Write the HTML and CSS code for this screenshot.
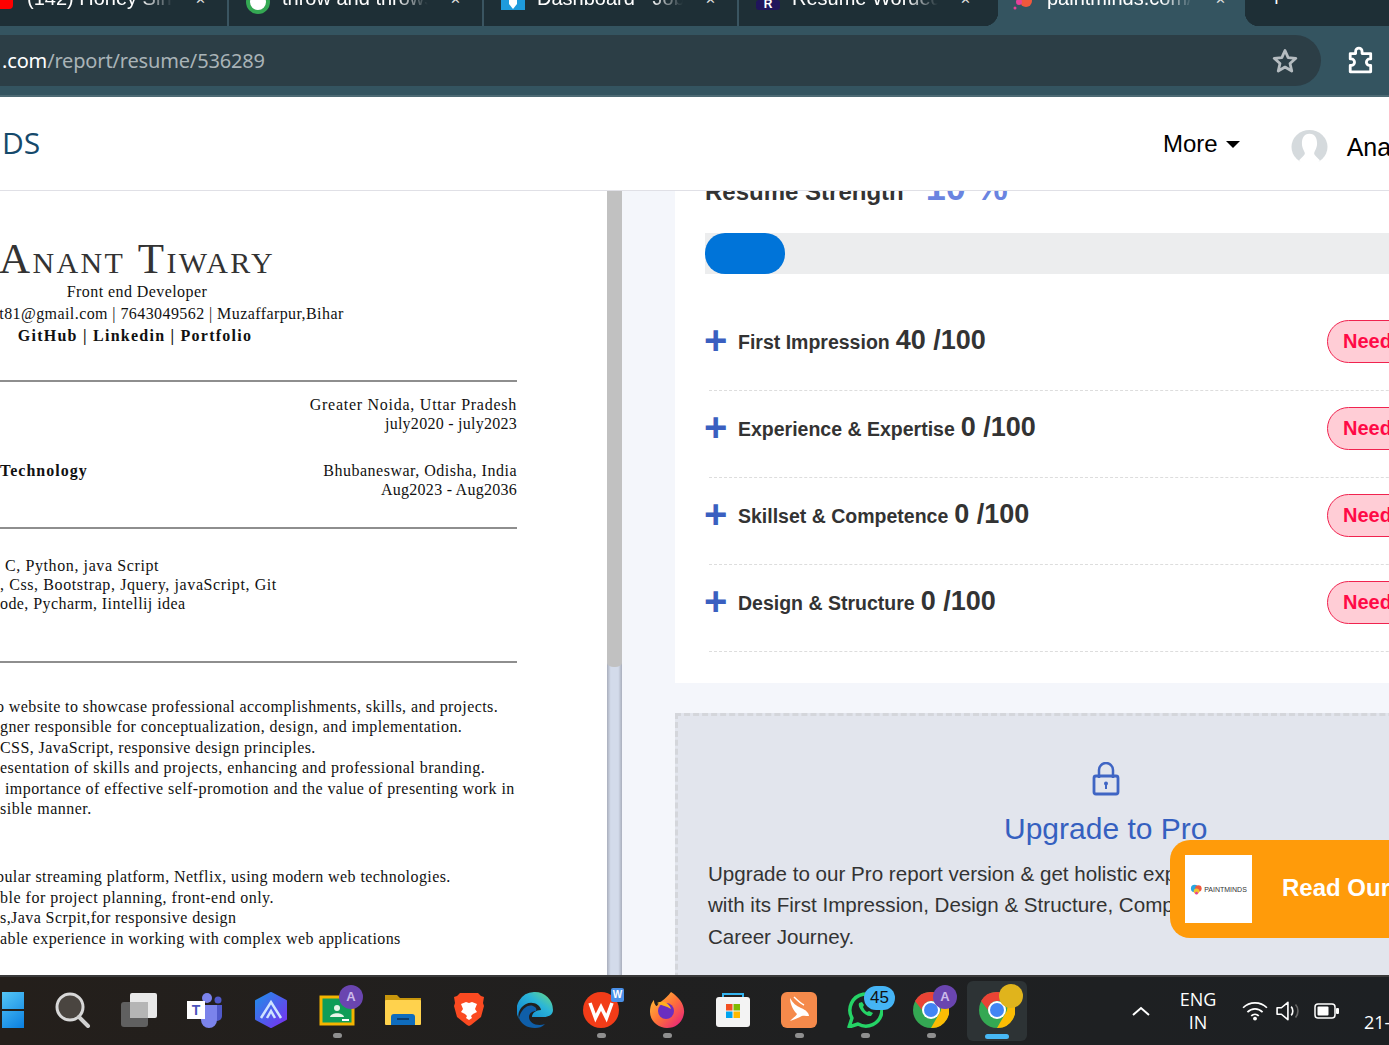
FILE: index.html
```html
<!DOCTYPE html>
<html lang="en">
<head>
<meta charset="utf-8">
<title>Resume report</title>
<link rel="stylesheet" href="styles.css">
</head>
<body>
<div class="tabstrip">
  <div class="tab t1"><svg class="fav" viewBox="0 0 22 22"><rect x="-9" y="-6" width="22" height="14" rx="4" fill="#f00"/></svg><span class="tabtxt">(142) Honey Singh</span><span class="tabx">✕</span></div>
  <div class="tab"><svg class="fav" viewBox="0 0 24 24"><circle cx="12" cy="2" r="10" fill="#fff" stroke="#34a853" stroke-width="4"/></svg><span class="tabtxt">throw and throws</span><span class="tabx">✕</span></div>
  <div class="tab"><svg class="fav" viewBox="0 0 24 24"><rect width="24" height="10" fill="#1e9bdc"/><path d="M8 0h8v4l-4 5-4-5z" fill="#fff"/></svg><span class="tabtxt">Dashboard - Jobs</span><span class="tabx">✕</span></div>
  <div class="tab last"><svg class="fav" viewBox="0 0 24 24"><rect width="24" height="10" rx="3" fill="#20145c"/><text x="12" y="8" class="favr">R</text></svg><span class="tabtxt">Resume Worded</span><span class="tabx">✕</span></div>
  <div class="tab active"><svg class="fav" viewBox="0 0 24 24"><circle cx="15" cy="1" r="6" fill="#f0583c"/><circle cx="8" cy="2" r="3" fill="#e6409a"/><circle cx="4" cy="8" r="1.500" fill="#e6409a"/></svg><span class="tabtxt">paintminds.com/r</span><span class="tabx">✕</span></div>
  <div class="newtab"><span class="plus">+</span></div>
</div>
<div class="toolbar">
  <div class="omni">
    <span class="url"><b class="host">.com</b>/report/resume/536289</span>
    <svg class="star" viewBox="0 0 24 24"><path d="M12 3l2.700 6.100 6.600.6-5 4.400 1.500 6.500L12 17.200l-5.800 3.400 1.500-6.500-5-4.400 6.600-.6z" fill="none" stroke="#b5bcc0" stroke-width="2.400" stroke-linejoin="round"/></svg>
  </div>
  <svg class="ext" viewBox="0 0 26 26"><path d="M3 7h5V5a3 3 0 0 1 6 0v2h8v5h-1a3 3 0 0 0 0 6h1v6H3v-6h1a3 3 0 0 0 0-6H3z" fill="none" stroke="#fff" stroke-width="2.600" stroke-linejoin="round"/></svg>
</div>
<header class="apphead">
  <span class="brand">DS</span>
  <nav class="nav">
    <span class="more">More</span><span class="caret"></span>
    <svg class="avatar" viewBox="0 0 38 38"><ellipse cx="19" cy="19" rx="19" ry="18" fill="#d5dadd"/><path d="M19 5c-6 0-8 5-8 10 0 5 2 7 3 10 .6 2-2 4-6 8l3 4h16l3-4c-4-4-6.600-6-6-8 1-3 3-5 3-10 0-5-2-10-8-10z" fill="#fff"/></svg>
    <span class="user">Ana</span>
  </nav>
</header>
<main class="main">
  <section class="pdf">
    <div class="page">
      <div class="head">
        <div class="name">Anant Tiwary</div>
        <div class="hl">Front end Developer</div>
        <div class="hl contact">t81@gmail.com | 7643049562 | Muzaffarpur,Bihar</div>
        <div class="hl links">GitHub | Linkedin | Portfolio</div>
      </div>
      <hr class="rule r1">
      <div class="edu e1"><span></span><span class="where"><span class="wide-m">Greater Noida, Uttar Pradesh</span><br><span class="tight-s">july2020 - july2023</span></span></div>
      <div class="edu e2"><b class="wide-b">Technology</b><span class="where"><span class="wide-xs">Bhubaneswar, Odisha, India</span><br><span class="tight-s">Aug2023 - Aug2036</span></span></div>
      <hr class="rule r2">
      <div class="skills"><div class="ind5 wide-s">C, Python, java Script</div><div class="wide-s">, Css, Bootstrap, Jquery, javaScript, Git</div><div>ode, Pycharm, Iintellij idea</div></div>
      <hr class="rule r3">
      <div class="para p1">
        <div class="cut">o website to showcase professional accomplishments, skills, and projects.</div>
        <div>gner responsible for conceptualization, design, and implementation.</div>
        <div>CSS, JavaScript, responsive design principles.</div>
        <div class="wide-xs">esentation of skills and projects, enhancing and professional branding.</div>
        <div class="ind5">importance of effective self-promotion and the value of presenting work in</div>
        <div class="wide-xs">sible manner.</div>
      </div>
      <div class="para p2">
        <div class="cut">pular streaming platform, Netflix, using modern web technologies.</div>
        <div class="wide-xs">ble for project planning, front-end only.</div>
        <div>s,Java Scrpit,for responsive design</div>
        <div>able experience in working with complex web applications</div>
      </div>
    </div>
  </section>
  <div class="scroll"><div class="thumb"></div></div>
  <section class="report">
    <div class="card">
      <div class="strength"><span class="st-l">Resume Strength</span><span class="st-v">10 %</span></div>
      <div class="bar"><div class="fill"></div></div>
      <div class="row"><span class="pl">+</span><span class="lab">First Impression</span><span class="score">40 /100</span><span class="pill">Needs Work</span></div>
      <div class="row"><span class="pl">+</span><span class="lab">Experience &amp; Expertise</span><span class="score">0 /100</span><span class="pill">Needs Work</span></div>
      <div class="row"><span class="pl">+</span><span class="lab">Skillset &amp; Competence</span><span class="score">0 /100</span><span class="pill">Needs Work</span></div>
      <div class="row"><span class="pl">+</span><span class="lab">Design &amp; Structure</span><span class="score">0 /100</span><span class="pill">Needs Work</span></div>
    </div>
    <div class="upgrade">
      <svg class="lock" viewBox="0 0 28 34"><path d="M7 16V8a7 7 0 0 1 14 0v8" fill="none" stroke="#3f65c4" stroke-width="2.500"/><rect x="2" y="14" width="24" height="18" rx="2" fill="none" stroke="#3f65c4" stroke-width="2.800"/><circle cx="14" cy="21.500" r="2" fill="#3f65c4"/><rect x="13" y="22" width="2" height="5" fill="#3f65c4"/></svg>
      <h2 class="up-t">Upgrade to Pro</h2>
      <p class="up-p">Upgrade to our Pro report version &amp; get holistic expert review of your resume<br>with its First Impression, Design &amp; Structure, Competence and more for your<br>Career Journey.</p>
    </div>
  </section>
  <a class="float">
    <span class="logo"><svg class="blob" viewBox="0 0 14 14"><circle cx="5" cy="6" r="4" fill="#2aa6e0"/><circle cx="9" cy="6" r="3.500" fill="#f0583c"/><circle cx="7" cy="9" r="3" fill="#f2c230"/><circle cx="7" cy="11" r="1.500" fill="#e6409a"/></svg><span class="logot">PAINTMINDS</span></span>
    <span class="readour">Read Our Blog</span>
  </a>
</main>
<footer class="taskbar">
  <div class="cell win"><svg viewBox="0 0 46 36" class="ic36"><defs><linearGradient id="w" x1="0" y1="0" x2="1" y2="1"><stop offset="0" stop-color="#6fe0ff"/><stop offset="1" stop-color="#0a7fe0"/></linearGradient></defs><path d="M0 0h22v17H0zM24 0h22v17H24zM0 19h22v17H0zM24 19h22v17H24z" fill="url(#w)"/></svg></div>
  <div class="cell"><svg viewBox="0 0 36 36" class="ic36"><circle cx="15" cy="15" r="13" fill="#4a4540" stroke="#d8d8d8" stroke-width="3"/><path d="M24 25l9 9" stroke="#d0d0d0" stroke-width="4" stroke-linecap="round"/></svg></div>
  <div class="cell"><svg viewBox="0 0 36 36" class="ic36"><rect x="0" y="10" width="27" height="25" rx="3" fill="#606060"/><rect x="9" y="1" width="27" height="25" rx="2" fill="#e8e8e8"/><rect x="9" y="10" width="18" height="16" fill="#b5b5b5"/></svg></div>
  <div class="cell"><svg viewBox="0 0 36 36" class="ic36"><circle cx="20" cy="6" r="5" fill="#7b83eb"/><circle cx="31" cy="8" r="3.500" fill="#5059c9"/><path d="M25 13h10v11a5 5 0 0 1-10 0z" fill="#5059c9"/><path d="M12 13h18v15a8 8 0 0 1-16 0z" fill="#7b83eb"/><rect x="0" y="9" width="18" height="18" fill="#fff"/><text x="9" y="23" class="tm">T</text></svg></div>
  <div class="cell"><svg viewBox="0 0 36 36" class="ic36"><defs><linearGradient id="a" x1="0" y1="0" x2="1" y2="1"><stop offset="0" stop-color="#1f8ee8"/><stop offset="1" stop-color="#7a2ff0"/></linearGradient></defs><path d="M18 1l15 8v18l-15 8-15-8V9z" fill="url(#a)" stroke="url(#a)" stroke-linejoin="round" stroke-width="2"/><path d="M8 26L18 10l10 16M14 26l4-7 4 7" fill="none" stroke="#cfe3ff" stroke-width="2.500"/></svg></div>
  <div class="cell dot"><svg viewBox="0 0 36 36" class="ic36"><rect x="2" y="5" width="32" height="27" fill="#0f9d58" stroke="#f4b400" stroke-width="3"/><circle cx="18" cy="16" r="3" fill="#e8f5e9"/><path d="M11 25c1-5 13-5 14 0z" fill="#e8f5e9"/><rect x="23" y="27" width="7" height="2" fill="#fff"/></svg><span class="badge pu">A</span></div>
  <div class="cell"><svg viewBox="0 0 36 36" class="ic36"><path d="M0 3h12l3 3h21v5H0z" fill="#c8960c"/><rect x="0" y="8" width="36" height="25" rx="1" fill="#ffd24d"/><path d="M6 33v-8a3 3 0 0 1 3-3h18a3 3 0 0 1 3 3v8z" fill="#0f6cbd"/><rect x="12" y="26" width="12" height="2" fill="#0a3d70"/></svg></div>
  <div class="cell"><svg viewBox="0 0 36 36" class="ic36"><path d="M9 1h18l3 3 3 1-1 6 1 3-3 11-10 8-2 1-2-1-10-8L3 14l1-3-1-6 3-1z" fill="#fb4a21"/><path d="M10 12l5-2 3 1 3-1 5 2-2 5 2 3-4 2-2 2 1 2-3 2-3-2 1-2-2-2-4-2 2-3z" fill="#fff"/></svg></div>
  <div class="cell"><svg viewBox="0 0 36 36" class="ic36"><defs><linearGradient id="e" x1="0" y1="1" x2="1" y2="0"><stop offset="0" stop-color="#0d7fd0"/><stop offset=".6" stop-color="#2bb5d8"/><stop offset="1" stop-color="#6fdc7c"/></linearGradient></defs><path d="M18 0a18 18 0 0 1 18 18c0 5-5 7-9 7H15c0-4 4-7 9-7-1-6-9-9-15-6C3 15 0 22 2 27A18 18 0 0 1 18 0z" fill="url(#e)"/><path d="M2 26c2-9 9-14 14-12 3 1 4 3 3 5-3 0-7 2-7 6 0 6 8 10 16 7-3 3-6 4-10 4-8 0-14-4-16-10z" fill="#0f5ea8"/></svg></div>
  <div class="cell dot"><svg viewBox="0 0 36 36" class="ic36"><circle cx="18" cy="18" r="18" fill="#f23c18"/><path d="M7 11l5.500 15 5.500-11 5.500 11L29 11" fill="none" stroke="#fff" stroke-width="3.500"/></svg><span class="wps">W</span></div>
  <div class="cell dot"><svg viewBox="0 0 36 36" class="ic36"><defs><linearGradient id="f" x1="0" y1="0" x2="1" y2="1"><stop offset="0" stop-color="#ffcc33"/><stop offset=".5" stop-color="#ff7139"/><stop offset="1" stop-color="#e31587"/></linearGradient></defs><path d="M22 0c8 5 14 13 13 21-1 9-8 15-17 15S1 29 1 20C1 14 3 10 5 8c0 4 2 6 3 6 2-4 8-6 14-14z" fill="url(#f)"/><circle cx="17" cy="19" r="8" fill="#6a2ec0"/><path d="M8 11c6-3 12 0 14 6-4-3-9-3-14-6z" fill="#ffb020"/></svg></div>
  <div class="cell"><svg viewBox="0 0 36 36" class="ic36"><path d="M8 6V2h20v4" fill="none" stroke="#33b4f0" stroke-width="2"/><rect x="1" y="5" width="34" height="30" rx="3" fill="#f3f3f3"/><path d="M11 12h6.500v6.500H11z" fill="#f25022"/><path d="M18.500 12H25v6.500h-6.500z" fill="#7fba00"/><path d="M11 19.500h6.500V26H11z" fill="#00a4ef"/><path d="M18.500 19.500H25V26h-6.500z" fill="#ffb900"/></svg></div>
  <div class="cell dot"><svg viewBox="0 0 36 36" class="ic36"><rect width="36" height="36" rx="6" fill="#f58a4b"/><path d="M9 6c3 5 6 8 11 10 5 2 8 5 8 8-3 0-7-1-9 1-3 1-6 3-10 4 3-3 6-5 7-7-3-3-7-9-7-16z" fill="#fff"/><path d="M13 5c3 3 6 6 10 8" fill="none" stroke="#fff" stroke-width="1.500"/></svg></div>
  <div class="cell dot"><svg viewBox="0 0 36 36" class="ic36"><path d="M2 35l3-9a16 16 0 1 1 6 6z" fill="none" stroke="#25d366" stroke-width="3.500" stroke-linejoin="round"/><path d="M12 11c-2 4 6 14 12 13l2-3-4-2-2 1c-2-1-3-3-4-5l1-2-2-3z" fill="#25d366"/></svg><span class="badge bl">45</span></div>
  <div class="cell dot"><svg viewBox="0 0 36 36" class="ic36"><use href="#chrome"/></svg><span class="badge pu">A</span></div>
  <div class="cell cur"><svg viewBox="0 0 36 36" class="ic36"><defs><g id="chrome"><circle cx="18" cy="18" r="18" fill="#34a853"/><path d="M18 0a18 18 0 0 1 16 9H18a9 9 0 0 0-9 9L2 9a18 18 0 0 1 16-9z" fill="#ea4335"/><path d="M34 9a18 18 0 0 1-16 27l8-14a9 9 0 0 0-1-13z" fill="#fbbc04"/><circle cx="18" cy="18" r="9" fill="#fff"/><circle cx="18" cy="18" r="7" fill="#4285f4"/></g></defs><use href="#chrome"/></svg><span class="badge ye"></span></div>
  <div class="tray">
    <svg class="chev" viewBox="0 0 18 10"><path d="M1 9l8-7 8 7" fill="none" stroke="#fff" stroke-width="2"/></svg>
    <div class="lang">ENG<br>IN</div>
    <svg class="wifi" viewBox="0 0 24 18"><path d="M1 6c6-6 16-6 22 0M5 10c4-4 10-4 14 0M8.500 13.500c2-2 5-2 7 0" fill="none" stroke="#fff" stroke-width="1.600"/><circle cx="12" cy="16" r="1.800" fill="#fff"/></svg>
    <svg class="vol" viewBox="0 0 24 18"><path d="M1 6h4l6-5v16l-6-5H1z" fill="none" stroke="#fff" stroke-width="1.500" stroke-linejoin="round"/><path d="M14 5c2 2 2 6 0 8" fill="none" stroke="#fff" stroke-width="1.500"/><path d="M18 3c3 3 3 9 0 12" fill="none" stroke="#666" stroke-width="1.500"/></svg>
    <svg class="bat" viewBox="0 0 26 16"><rect x="1" y="1" width="20" height="14" rx="3" fill="none" stroke="#fff" stroke-width="1.500"/><rect x="3.500" y="3.500" width="11" height="9" rx="1" fill="#fff"/><rect x="22" y="5" width="3" height="6" rx="1" fill="#fff"/></svg>
    <div class="clock">21-</div>
  </div>
</footer>
</body>
</html>
```
FILE: styles.css
```css
* { box-sizing: border-box; }
html, body { margin: 0; height: 1045px; overflow: hidden; }
body { width: 1389px; display: flex; flex-direction: column; font-family: "Liberation Sans", Arial, sans-serif; background: #fff; }

/* browser tabs */
.tabstrip { height: 26px; flex: none; display: flex; background: #1e2f36; overflow: hidden; }
.tab { width: 255px; flex: none; height: 26px; display: flex; align-items: flex-start; padding-left: 17px; color: #fff; font-size: 20px; position: relative; border-right: 2px solid #3a5561; }
.tab.t1 { width: 229px; padding-left: 0; }
.tab.t1 .fav { width: 22px; margin-right: 5px; }
.tab.last { border-right: 0; width: 259px; }
.tab.active { width: 247px; background: #345460; border: 0; padding-left: 13px; }
.tab.active::before, .tab.active::after { content: ""; position: absolute; bottom: 0; width: 14px; height: 14px; }
.tab.active::before { left: -14px; background: radial-gradient(circle at 0 0, transparent 14px, #345460 14.5px); }
.tab.active::after { right: -14px; background: radial-gradient(circle at 100% 0, transparent 14px, #345460 14.5px); }
.fav { width: 24px; height: 24px; flex: none; margin-right: 12px; }
.favr { font: bold 12px "Liberation Sans", sans-serif; fill: #fff; text-anchor: middle; }
.tabtxt { width: 146px; overflow: hidden; white-space: nowrap; margin-top: -15px; line-height: 26px; flex: none; -webkit-mask-image: linear-gradient(90deg, #000 78%, transparent); mask-image: linear-gradient(90deg, #000 78%, transparent); }
.tabx { font-size: 13px; color: #ddd; margin: -6px 0 0 22px; line-height: 12px; }
.newtab { flex: 1; position: relative; }
.plus { color: #fff; font-size: 22px; line-height: 12px; display: block; padding-left: 25px; margin-top: -7px; }

/* toolbar */
.toolbar { height: 71px; flex: none; display: flex; align-items: flex-start; background: #345460; border-bottom: 2px solid #4d6a74; padding-top: 9px; }
.omni { width: 1321px; height: 51px; background: #2c3e46; border-radius: 0 26px 26px 0; display: flex; align-items: center; justify-content: space-between; padding: 0 22px 0 2px; }
.url { font-family: "Noto Sans", sans-serif; font-size: 20px; letter-spacing: -.16px; color: #a9b3b7; }
.host { font-weight: 400; color: #fff; }
.star { width: 28px; height: 28px; }
.ext { width: 28px; height: 28px; margin: 11px 0 0 26px; }

/* site header */
.apphead { height: 94px; flex: none; display: flex; align-items: center; justify-content: space-between; border-bottom: 1px solid #e0e0e6; background: #fff; padding: 0 0 0 2px; }
.brand { font-family: "Open Sans", sans-serif; font-size: 30px; color: #15496b; margin-top: -2px; }
.nav { display: flex; align-items: center; white-space: nowrap; width: 226px; flex: none; overflow: hidden; margin-top: 5px; }
.more { font-size: 24px; color: #000; margin-top: -5px; }
.caret { border: 7px solid transparent; border-top-color: #000; border-bottom: 0; margin: -3px 0 0 8px; }
.avatar { width: 37px; height: 36px; margin: 2px 0 0 51px; flex: none; }
.user { font-size: 25px; color: #000; margin: 2px 0 0 19px; }

/* main split */
.main { flex: 1; min-height: 0; display: flex; position: relative; overflow: hidden; background: #f4f6fb; }
.pdf { width: 607px; flex: none; background: #fff; overflow: hidden; font-family: "Liberation Serif", serif; color: #111; font-size: 16px; letter-spacing: .42px; line-height: 19px; }
.page { width: 517px; padding-top: 45px; }
.scroll { width: 15px; flex: none; background: linear-gradient(90deg, #a9aebc 0, #d3dbea 25%, #d3dbea 75%, #a9aebc 100%); }
.thumb { height: 476px; background: #c1c1c1; border-radius: 0 0 7px 7px / 0 0 4px 4px; }
.head { width: 274px; display: flex; flex-direction: column; align-items: center; white-space: nowrap; }
.name { font-variant: small-caps; font-size: 43px; line-height: 45px; letter-spacing: 2.400px; color: #333; }
.hl { line-height: 22px; }
.contact { margin-left: 69px; }
.links { font-weight: 700; letter-spacing: 1.250px; margin-right: 4px; }
.wide-m { letter-spacing: .74px; }
.wide-s { letter-spacing: .6px; }
.wide-xs { letter-spacing: .5px; }
.wide-b { letter-spacing: 1px; }
.tight-s { letter-spacing: .26px; }
.rule { border: 0; height: 2px; background: #8e8e8e; margin: 0; }
.r1 { margin-top: 33px; }
.edu { display: flex; justify-content: space-between; }
.where { text-align: right; }
.e1 { margin-top: 13px; }
.e2 { margin-top: 28px; }
.r2 { margin-top: 28px; }
.skills { margin-top: 27px; white-space: nowrap; }
.ind5 { padding-left: 5px; }
.r3 { margin-top: 48px; }
.para { line-height: 20.400px; white-space: nowrap; }
.cut { margin-left: -4px; }
.p1 { margin-top: 34px; }
.p2 { margin-top: 48px; }

/* report */
.report { flex: 1; min-width: 0; padding-left: 53px; overflow: hidden; }
.card { width: 800px; height: 492px; background: #fff; padding: 0 0 0 30px; overflow: hidden; }
.strength { height: 54px; margin-top: -29px; padding-top: 5px; display: flex; align-items: baseline; gap: 22px; }
.st-l { font-size: 24px; font-weight: 700; color: #333; }
.st-v { font-size: 36px; font-weight: 700; color: #6a84e0; }
.bar { height: 41px; background: #ecedee; margin: 17px 0 30px; }
.fill { width: 80px; height: 41px; border-radius: 20px; background: #0074d9; }
.row { height: 87px; width: 770px; margin-left: 4px; border-bottom: 1px dashed #ddd; display: flex; align-items: center; padding-bottom: 10px; white-space: nowrap; color: #333; position: relative; }
.pl { font-size: 40px; font-weight: 700; color: #3a5fc0; width: 34px; margin: -4px 0 0 -5px; line-height: 30px; }
.lab { font-size: 19.500px; font-weight: 700; }
.score { font-size: 27px; font-weight: 700; margin-left: 6px; margin-top: -4px; }
.pill { position: absolute; left: 618px; top: 16px; height: 43px; padding: 0 15px; border: 1px solid #f0234f; border-radius: 22px; background: #ffcdd6; color: #ff0a46; font-size: 20px; font-weight: 700; line-height: 41px; width: 200px; }
.upgrade { margin-top: 30px; width: 900px; height: 400px; background: #e2e5ed; border-top: 3px dashed #d4d6db; border-left: 3px dashed #d4d6db; padding: 46px 0 0 30px; color: #333; }
.lock { display: block; width: 28px; height: 34px; margin-left: 384px; }
.up-t { margin: 16px 0 0 -1px; width: 798px; font-size: 30px; font-weight: 400; color: #3560c0; line-height: 34px; text-align: left; padding-left: 297px; }
.up-p { margin: 12px 0 0; font-size: 20.600px; line-height: 31.300px; white-space: nowrap; }

/* floating call to action */
.float { position: absolute; left: 1170px; top: 649px; width: 300px; height: 98px; background: #ff9b0a; border-radius: 20px 0 0 20px; display: flex; align-items: center; gap: 30px; padding-left: 15px; }
.logo { width: 67px; height: 68px; background: #fff; display: flex; align-items: center; justify-content: center; gap: 1px; flex: none; }
.blob { width: 13px; height: 13px; flex: none; }
.logot { font-size: 7px; color: #333; white-space: nowrap; }
.readour { font-size: 24px; font-weight: 700; color: #fff; white-space: nowrap; margin-top: -2px; }

/* taskbar */
.taskbar { height: 70px; flex: none; display: flex; align-items: stretch; background: linear-gradient(90deg, #241f1b 0, #1f2021 60%, #1d2023 100%); border-top: 2px solid #3a3a3a; overflow: hidden; }
.cell { width: 66px; flex: none; position: relative; display: flex; align-items: center; justify-content: center; padding-bottom: 2px; }
.cell.win { width: 40px; justify-content: flex-start; margin-left: -22px; margin-right: 22px; }
.ic36 { width: 36px; height: 36px; display: block; flex: none; }
.win .ic36 { width: 46px; }
.tm { font: bold 14px "Liberation Sans", sans-serif; fill: #4b53bc; text-anchor: middle; }
.dot::after { content: ""; position: absolute; bottom: 7px; left: 50%; margin-left: -4px; width: 9px; height: 5px; border-radius: 3px; background: #8f8f8f; }
.cur { background: #2d3335; width: 60px; margin: 4px 3px; border-radius: 6px; }
.cur::after { content: ""; position: absolute; bottom: 2px; left: 18px; width: 24px; height: 5px; border-radius: 3px; background: #47b8f5; }
.badge { position: absolute; top: 8px; left: 35px; width: 24px; height: 24px; border-radius: 12px; background: #6a45b0; color: #cdbbea; font-size: 13px; font-weight: 700; text-align: center; line-height: 24px; }
.badge.bl { background: #45b4f5; color: #111; width: 31px; font-weight: 400; font-size: 17px; left: 32px; top: 9px; }
.badge.ye { background: #e0b41c; left: 32px; top: 3px; }
.wps { position: absolute; top: 11px; left: 43px; width: 13px; height: 14px; background: #4a90e8; color: #fff; font-size: 10px; font-weight: 700; text-align: center; line-height: 14px; border-radius: 2px; }
.tray { flex: 1; display: flex; align-items: center; color: #fff; white-space: nowrap; position: relative; padding-left: 102px; }
.chev { width: 18px; height: 10px; flex: none; }
.lang { font-size: 18px; line-height: 23px; text-align: center; width: 40px; margin-left: 28px; font-family: "Open Sans", sans-serif; }
.wifi { width: 26px; height: 20px; margin-left: 24px; flex: none; }
.vol { width: 26px; height: 20px; margin-left: 8px; flex: none; }
.bat { width: 26px; height: 16px; margin-left: 12px; flex: none; }
.clock { font-size: 18px; font-family: "Open Sans", sans-serif; margin: 22px 0 0 24px; }
```
